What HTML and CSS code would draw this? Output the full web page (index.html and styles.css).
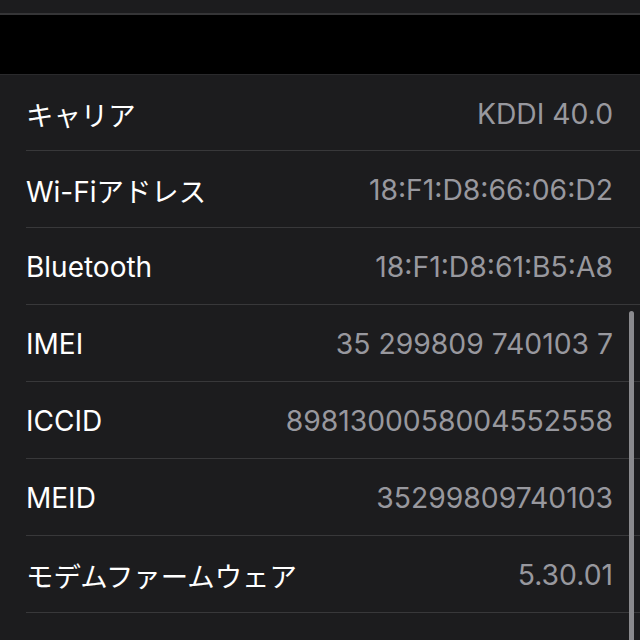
FILE: index.html
```html
<!DOCTYPE html>
<html lang="ja">
<head>
  <meta charset="UTF-8" />
  <meta name="viewport" content="width=device-width, initial-scale=1" />
  <title>情報</title>
  <link rel="stylesheet" href="styles.css">
</head>
<body>

  <div class="top-bar"></div>
  <div class="section-gap"></div>

  <div class="list">
    <div class="row"><div class="row-inner"><span class="label"><span class="ja">キャリア</span></span><span class="value">KDDI 40.0</span></div></div>
    <div class="row"><div class="row-inner"><span class="label">Wi-Fi<span class="ja">アドレス</span></span><span class="value">18:F1:D8:66:06:D2</span></div></div>
    <div class="row"><div class="row-inner"><span class="label">Bluetooth</span><span class="value">18:F1:D8:61:B5:A8</span></div></div>
    <div class="row"><div class="row-inner"><span class="label">IMEI</span><span class="value">35 299809 740103 7</span></div></div>
    <div class="row"><div class="row-inner"><span class="label">ICCID</span><span class="value">8981300058004552558</span></div></div>
    <div class="row"><div class="row-inner"><span class="label">MEID</span><span class="value">35299809740103</span></div></div>
    <div class="row"><div class="row-inner"><span class="label"><span class="ja">モデムファームウェア</span></span><span class="value">5.30.01</span></div></div>
  </div>

  <div class="scroll-indicator"></div>

</body>
</html>
```

FILE: styles.css
```css
body {
  margin: 0;
  height: 640px;
  overflow: hidden;
  position: relative;
  background: #1c1c1e;
  font-family: Inter, "Noto Sans CJK JP", sans-serif;
  -webkit-font-smoothing: antialiased;
}

.top-bar {
  height: 13px;
  background: #1c1c1e;
  border-bottom: 2px solid #353537;
}

.section-gap {
  height: 59px;
  background: #000;
}

.list {
  background: #1c1c1e;
  border-top: 1px solid #2a2a2c;
}

.row {
  padding-left: 26px;
}

.row-inner {
  height: 77px;
  box-sizing: border-box;
  display: flex;
  align-items: center;
  justify-content: space-between;
  padding-top: 2px;
  padding-right: 27px;
  border-bottom: 1px solid #38383a;
}

.row:first-child .row-inner {
  height: 76px;
}

.label {
  font-size: 28px;
  color: #ffffff;
}

.label .ja {
  font-size: 27.4px;
}

.value {
  font-size: 28.3px;
  color: #98989e;
}

.scroll-indicator {
  position: absolute;
  top: 311px;
  right: 6px;
  bottom: 0;
  width: 5px;
  border-radius: 3px 3px 0 0;
  background: #8a8a8e;
}
```
